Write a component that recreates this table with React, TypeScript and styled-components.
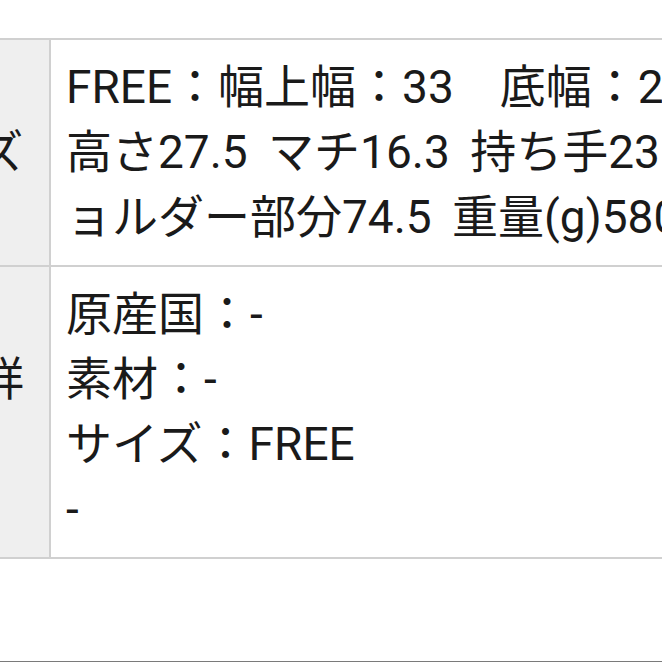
import styled, { createGlobalStyle } from "styled-components";

const GlobalStyle = createGlobalStyle`
  html, body {
    margin: 0;
    padding: 0;
    background: #fff;
    overflow: hidden;
  }
  body {
    font-family: Roboto, "Noto Sans CJK JP", sans-serif;
    color: #1a1a1a;
  }
`;

const Page = styled.div`
  width: 662px;
  height: 662px;
  display: flex;
  flex-direction: column;
  overflow: hidden;
`;

const TopGap = styled.div`
  height: 38px;
  flex-shrink: 0;
`;

// the table is wider than the window; its label column starts off-screen
const Table = styled.div`
  width: 1100px;
  margin-left: -139px;
  border-top: 2px solid #d0d0d0;
  flex-shrink: 0;
`;

const Row = styled.div`
  display: grid;
  grid-template-columns: 190px 1fr;
  border-bottom: 2px solid #d0d0d0;
`;

const Label = styled.div`
  background: #efefef;
  border-right: 2px solid #d0d0d0;
  display: flex;
  flex-direction: column;
  align-items: center;
  justify-content: center;
  text-align: center;
  white-space: nowrap;
  font-size: 46px;
  line-height: 65px;
`;

const Value = styled.div`
  padding: 15px 0 15px 15px;
  font-size: 46px;
  line-height: 65px;
  word-spacing: 9px;
`;

const Line = styled.div`
  white-space: nowrap;
`;

const Filler = styled.div`
  flex: 1;
`;

const BottomEdge = styled.div`
  height: 1px;
  background: #7a7a7a;
  flex-shrink: 0;
`;

const rows = [
  {
    label: ["サイズ"],
    lines: [
      "FREE：幅上幅：33　底幅：24",
      "高さ27.5 マチ16.3 持ち手23.5 シ",
      "ョルダー部分74.5 重量(g)580",
    ],
  },
  {
    label: ["商品詳", "細"],
    lines: ["原産国：-", "素材：-", "サイズ：FREE", "-"],
  },
];

export default function App() {
  return (
    <Page>
      <GlobalStyle />
      <TopGap />
      <Table>
        {rows.map((row) => (
          <Row key={row.label.join("")}>
            <Label>
              {row.label.map((l, i) => (
                <Line key={i}>{l}</Line>
              ))}
            </Label>
            <Value>
              {row.lines.map((line, i) => (
                <Line key={i}>{line}</Line>
              ))}
            </Value>
          </Row>
        ))}
      </Table>
      <Filler />
      <BottomEdge />
    </Page>
  );
}
